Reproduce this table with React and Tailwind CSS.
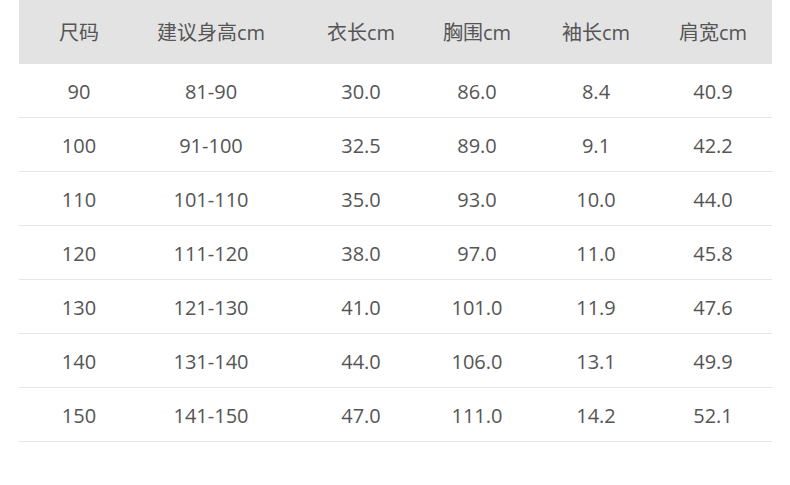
import React from "react";

const headers = ["尺码", "建议身高cm", "衣长cm", "胸围cm", "袖长cm", "肩宽cm"];

const rows = [
  ["90", "81-90", "30.0", "86.0", "8.4", "40.9"],
  ["100", "91-100", "32.5", "89.0", "9.1", "42.2"],
  ["110", "101-110", "35.0", "93.0", "10.0", "44.0"],
  ["120", "111-120", "38.0", "97.0", "11.0", "45.8"],
  ["130", "121-130", "41.0", "101.0", "11.9", "47.6"],
  ["140", "131-140", "44.0", "106.0", "13.1", "49.9"],
  ["150", "141-150", "47.0", "111.0", "14.2", "52.1"],
];

// column tracks tuned so each centre sits where the size chart has it
const cols = "grid grid-cols-[120px_144px_156px_76px_162px_72px_1fr] items-center text-center";

const App = () => (
  <div
    className="w-[790px] h-[485px] bg-white pl-[19px] pr-[18px] text-[20px] text-[#555555]"
    style={{ fontFamily: '"Open Sans", "Noto Sans CJK SC", sans-serif' }}
  >
    {/* header */}
    <div className={`${cols} h-[64px] bg-[#e3e3e3]`}>
      {headers.map((h) => (
        <div key={h} className="whitespace-nowrap pt-[2px]">{h}</div>
      ))}
    </div>

    {/* body */}
    {rows.map((r) => (
      <div key={r[0]} className={`${cols} h-[54px] border-b border-[#e6e6e6]`}>
        {r.map((v, i) => (
          <div key={i} className="pt-[3px]">{v}</div>
        ))}
      </div>
    ))}
  </div>
);

export default App;
